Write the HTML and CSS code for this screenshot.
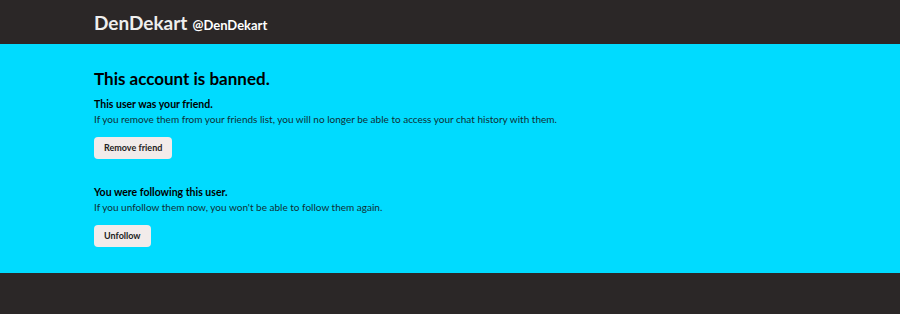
FILE: index.html
```html
<!DOCTYPE html>
<html lang="en">
<head>
    <meta charset="UTF-8">
    <title>DenDekart</title>
    <link rel="stylesheet" href="styles.css">
</head>
<body>
    <header class="topbar">
        <div class="wrap">
            <span class="name">DenDekart</span>
            <span class="handle">@DenDekart</span>
        </div>
    </header>

    <main class="banned">
        <div class="wrap">
            <h1>This account is banned.</h1>

            <div class="block">
                <h3>This user was your friend.</h3>
                <p>If you remove them from your friends list, you will no longer be able to access your chat history with them.</p>
                <button>Remove friend</button>
            </div>

            <div class="block">
                <h3>You were following this user.</h3>
                <p>If you unfollow them now, you won't be able to follow them again.</p>
                <button>Unfollow</button>
            </div>
        </div>
    </main>
</body>
</html>
```

FILE: styles.css
```css
body {
    margin: 0;
    font-family: Lato, "Noto Sans", sans-serif;
    background-color: #2b2727;
    color: #000;
}
.wrap {
    padding: 0 94px;
}
.topbar {
    height: 44px;
    color: #eeeeee;
}
.topbar .wrap {
    display: flex;
    align-items: baseline;
    gap: 5px;
    padding-top: 11px;
}
.name {
    font-size: 19px;
    font-weight: bold;
}
.handle {
    font-size: 13px;
    font-weight: bold;
    color: #fff;
}
.banned {
    background-color: #00dbff;
    padding: 25px 0 26px;
}
h1 {
    margin: 0 0 8px;
    font-size: 17px;
    line-height: 20px;
}
.block {
    margin-bottom: 26px;
}
.block:last-child {
    margin-bottom: 0;
}
h3 {
    margin: 0 0 1px;
    font-size: 10.5px;
    line-height: 14px;
}
p {
    margin: 0 0 11px;
    font-size: 10px;
    line-height: 14px;
    color: #0f2f35;
}
button {
    display: block;
    font-family: inherit;
    font-size: 9px;
    font-weight: bold;
    color: #222;
    background-color: #f2ebea;
    border: none;
    border-radius: 4px;
    padding: 0 10px 2px;
    height: 22px;
}
```
